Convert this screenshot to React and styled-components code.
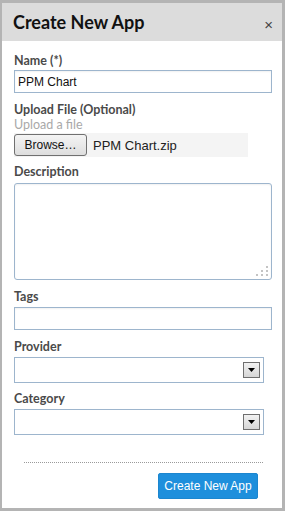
import React from "react";
import styled, { createGlobalStyle } from "styled-components";

const Global = createGlobalStyle`
  html, body { margin: 0; padding: 0; background: #ffffff; }
  * { box-sizing: border-box; }
`;

const Frame = styled.div`
  width: 285px;
  height: 511px;
  border-style: solid;
  border-color: #b4b4b4;
  border-width: 3px 3px 3px 2px;
  background: #ffffff;
  display: flex;
  flex-direction: column;
`;

const Header = styled.div`
  height: 38px;
  flex: none;
  background: #dcdcdc;
  display: flex;
  align-items: center;
  justify-content: space-between;
  padding: 0 9px 0 11px;
`;

const Title = styled.h1`
  margin: 0;
  font-family: Lato, "Open Sans", sans-serif;
  font-weight: 700;
  font-size: 18px;
  color: #111111;
  line-height: 22px;
`;

const Close = styled.span`
  font-family: "Liberation Sans", Arial, sans-serif;
  font-size: 15px;
  color: #444444;
  line-height: 15px;
  margin-top: 5px;
`;

const Body = styled.div`
  padding: 13px 10px 0 12px;
  display: flex;
  flex-direction: column;
`;

const Label = styled.label`
  display: block;
  font-family: Lato, "Open Sans", sans-serif;
  font-weight: 700;
  font-size: 12.5px;
  line-height: 14px;
  color: #4a4a4a;
  margin-top: ${(p) => p.$top || 0}px;
  margin-bottom: ${(p) => (p.$gap === undefined ? 3 : p.$gap)}px;
`;

const Hint = styled.div`
  font-family: Lato, "Open Sans", sans-serif;
  font-size: 12.5px;
  line-height: 14px;
  color: #a9a9a9;
  margin-bottom: 1px;
`;

const TextInput = styled.input`
  display: block;
  width: 258px;
  height: 23px;
  border: 1px solid #9db5cd;
  border-radius: 0;
  padding: 0 3px;
  font-family: "Liberation Sans", Arial, sans-serif;
  font-size: 12px;
  color: #111111;
  background: #ffffff;
  box-shadow: inset 0 1px 2px rgba(0, 0, 0, 0.06);
  outline: none;
`;

const FileRow = styled.div`
  width: 234px;
  height: 24px;
  background: #f4f4f4;
  display: flex;
  align-items: center;
  gap: 6px;
`;

const BrowseButton = styled.button`
  width: 73px;
  height: 22px;
  margin: 0;
  padding: 0;
  border: 1px solid #707070;
  border-radius: 3px;
  background: linear-gradient(#f4f4f4, #dedede);
  font-family: "Liberation Sans", Arial, sans-serif;
  font-size: 12px;
  color: #111111;
`;

const FileName = styled.span`
  font-family: "Liberation Sans", Arial, sans-serif;
  font-size: 13px;
  color: #222222;
`;

const AreaWrap = styled.div`
  position: relative;
  width: 258px;
  height: 97px;
`;

const TextArea = styled.textarea`
  display: block;
  width: 100%;
  height: 100%;
  border: 1px solid #9db5cd;
  border-radius: 3px;
  resize: none;
  outline: none;
  margin: 0;
  box-shadow: inset 0 1px 2px rgba(0, 0, 0, 0.06);
`;

const Grip = styled.svg`
  position: absolute;
  right: 4px;
  bottom: 4px;
`;

const Select = styled.div`
  width: 250px;
  height: 26px;
  border: 1px solid #9db5cd;
  background: #ffffff;
  display: flex;
  align-items: center;
  justify-content: flex-end;
  padding-right: 3px;
`;

const ArrowBox = styled.div`
  width: 17px;
  height: 16px;
  border: 1px solid #6f6f6f;
  background: linear-gradient(#f2f2f2, #d6d6d6);
  display: flex;
  align-items: center;
  justify-content: center;
`;

const Divider = styled.div`
  margin: 27px 0 0 10px;
  width: 239px;
  border-top: 1px dotted #9a9a9a;
`;

const Footer = styled.div`
  display: flex;
  justify-content: flex-end;
  padding-right: 14px;
  margin-top: 10px;
`;

const PrimaryButton = styled.button`
  width: 100px;
  height: 26px;
  border: 1px solid #1c86cf;
  border-radius: 2px;
  background: #1e8fdc;
  color: #ffffff;
  font-family: "Liberation Sans", Arial, sans-serif;
  font-size: 12px;
  padding: 0;
`;

function Dropdown() {
  return (
    <Select>
      <ArrowBox>
        <svg width="7" height="4" viewBox="0 0 7 4">
          <path d="M0 0H7L3.5 4Z" fill="#000" />
        </svg>
      </ArrowBox>
    </Select>
  );
}

export default function App() {
  const dots = [
    [10, 0],
    [5, 4],
    [10, 4],
    [0, 8],
    [5, 8],
    [10, 8],
  ];
  return (
    <>
      <Global />
      <Frame>
        <Header>
          <Title>Create New App</Title>
          <Close>×</Close>
        </Header>
        <Body>
          <Label $gap={2}>Name (*)</Label>
          <TextInput defaultValue="PPM Chart" />
          <Label $top={10} $gap={1}>Upload File (Optional)</Label>
          <Hint>Upload a file</Hint>
          <FileRow>
            <BrowseButton>Browse…</BrowseButton>
            <FileName>PPM Chart.zip</FileName>
          </FileRow>
          <Label $top={8} $gap={4}>Description</Label>
          <AreaWrap>
            <TextArea />
            <Grip width="12" height="10" viewBox="0 0 12 10">
              {dots.map(([x, y]) => (
                <rect key={`${x}-${y}`} x={x} y={y} width="2" height="2" fill="#c4c4c4" />
              ))}
            </Grip>
          </AreaWrap>
          <Label $top={10}>Tags</Label>
          <TextInput />
          <Label $top={10}>Provider</Label>
          <Dropdown />
          <Label $top={9}>Category</Label>
          <Dropdown />
          <Divider />
          <Footer>
            <PrimaryButton>Create New App</PrimaryButton>
          </Footer>
        </Body>
      </Frame>
    </>
  );
}
